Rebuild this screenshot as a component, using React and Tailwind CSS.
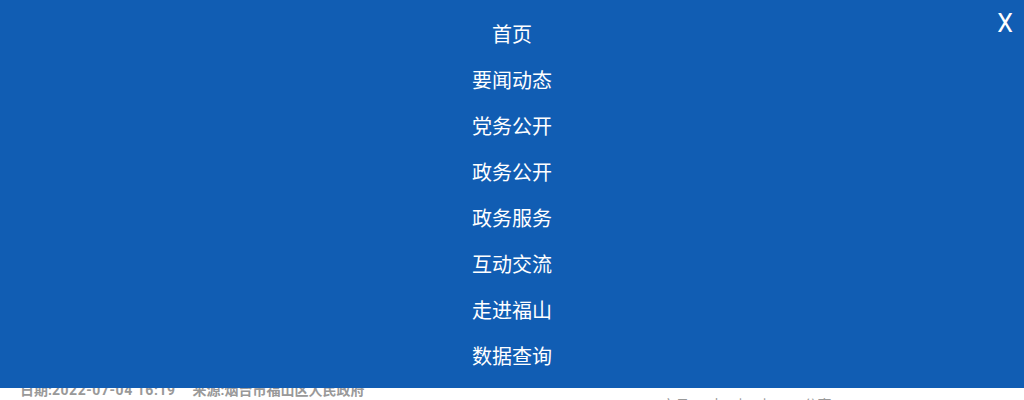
import React from 'react';

const menu = ['首页', '要闻动态', '党务公开', '政务公开', '政务服务', '互动交流', '走进福山', '数据查询'];

const App = () => {
    return (
        <div className="relative h-[400px] w-[1024px] overflow-hidden bg-white" style={{ fontFamily: 'Roboto, "Noto Sans CJK SC", sans-serif' }}>
            <div className="pt-[380px] px-5 flex items-start text-[14px] font-bold text-[#999] leading-[20px]">
                <div className="flex gap-[17px]">
                    <span>日期:<span className="tracking-[0.55px]">2022-07-04 16:19</span></span>
                    <span>来源:烟台市福山区人民政府</span>
                </div>
                <div className="ml-[297px] mt-[15px] flex font-normal">
                    <span>字号：</span>
                    <span className="ml-[6px]">大</span>
                    <span className="ml-[10px]">中</span>
                    <span className="ml-[10px]">小</span>
                    <span className="ml-[32px]">分享</span>
                </div>
            </div>

            <div className="absolute left-0 top-0 w-full h-[388px] bg-[#115db3] text-white">
                <ul className="pt-[12px] flex flex-col items-center">
                    {menu.map((item) => (
                        <li key={item} className="h-[46px] leading-[46px] text-[20px]">{item}</li>
                    ))}
                </ul>
                <button className="absolute right-[11px] top-[6px] text-[25px] leading-[36px] text-white">X</button>
            </div>
        </div>
    );
};

export default App;
